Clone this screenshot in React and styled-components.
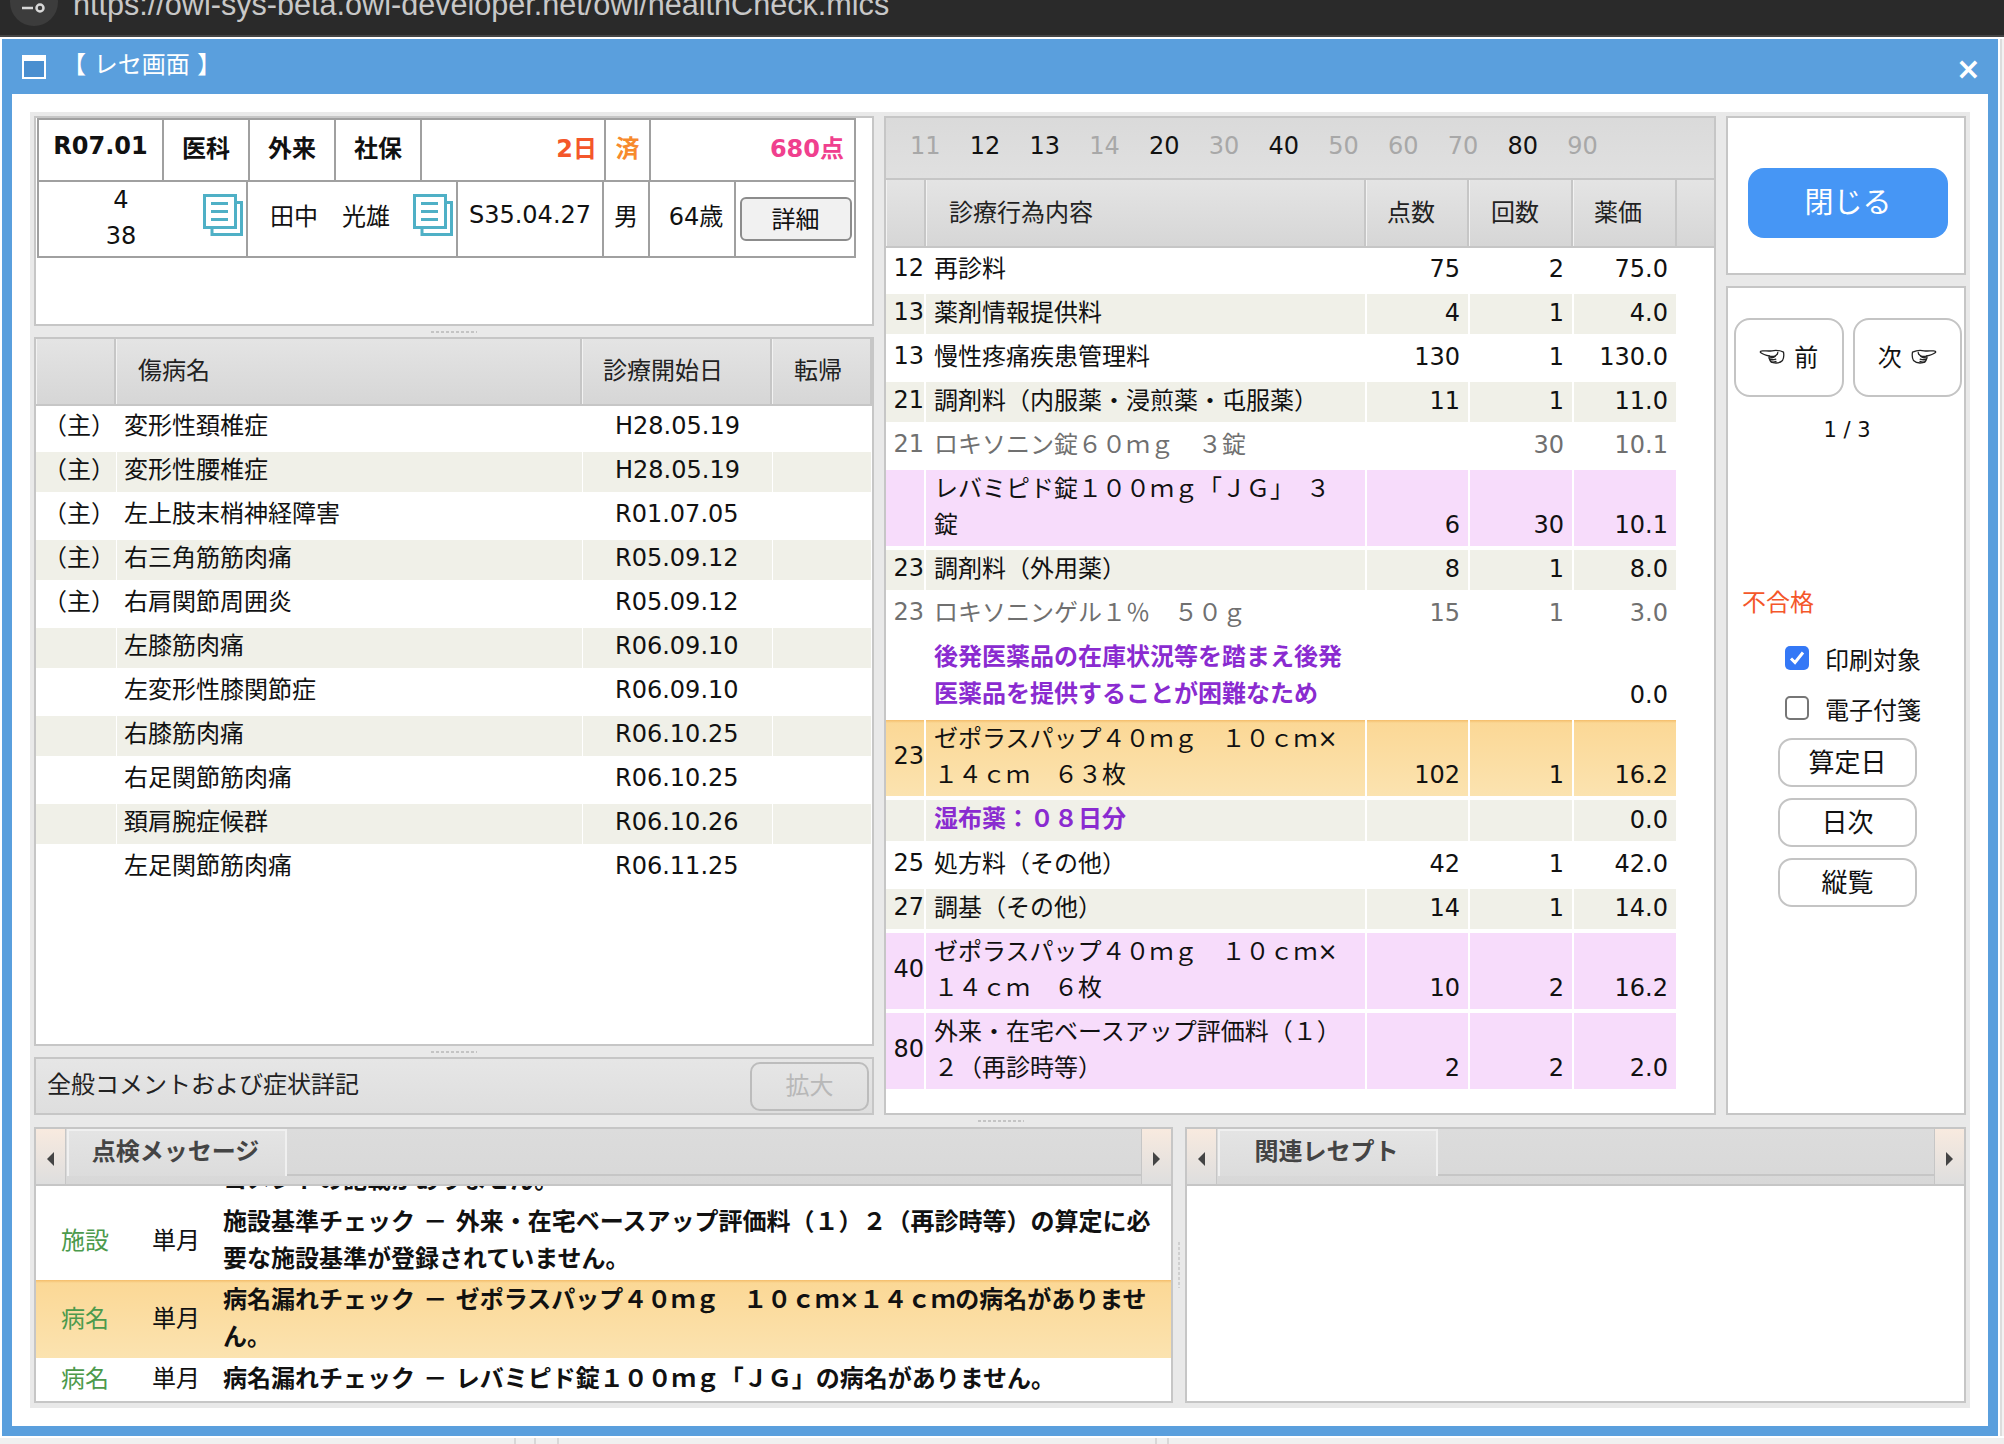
import React from "react";
import styled, { createGlobalStyle, css } from "styled-components";

const Global = createGlobalStyle`
  html, body { margin: 0; padding: 0; background: #fff; }
  body { font-family: "DejaVu Sans", "Noto Sans CJK JP", sans-serif; font-size: 24px; color: #111; }
  * { box-sizing: border-box; }
`;

const Page = styled.div`
  width: 2004px;
  height: 1444px;
  overflow: hidden;
  display: flex;
  flex-direction: column;
  background: #fff;
`;
const AddressBar = styled.div`
  height: 37px;
  background: #2a2a2a;
  border-bottom: 2px solid #444;
  display: flex;
  align-items: flex-end;
  overflow: hidden;
  padding: 0 0 16px 10px;
  flex: none;
`;
const SiteBadge = styled.div`
  width: 48px;
  height: 48px;
  border-radius: 50%;
  background: #3c3c3c;
  flex: none;
  margin-bottom: -7px;
  display: flex;
  align-items: flex-end;
  justify-content: center;
  padding-bottom: 12px;
`;
const Url = styled.div`
  font-family: "Liberation Sans", sans-serif;
  font-size: 30.6px;
  line-height: 30px;
  color: #c8c8c8;
  margin-left: 15px;
  white-space: nowrap;
`;
const MainRow = styled.div`
  display: flex;
  justify-content: space-between;
  margin-top: 2px;
  height: 1397px;
  flex: none;
`;
const PageEdge = styled.div`
  width: 4px;
  background: linear-gradient(90deg, #dcdcdc 0 2px, #f2f2f2 2px);
`;
const Window = styled.div`
  margin-left: 2px;
  width: 1996px;
  background: #5a9fdd;
  display: flex;
  flex-direction: column;
`;
const TitleBar = styled.div`
  height: 55px;
  display: flex;
  align-items: center;
  padding: 0 20px;
  color: #fff;
  flex: none;
`;
const WindowGlyph = styled.div`
  width: 24px;
  height: 24px;
  border: 2px solid #fff;
  border-top-width: 6px;
  background: #4a8fd0;
  margin-right: 16px;
  flex: none;
`;
const Title = styled.div`
  font-size: 24px;
  line-height: 30px;
  flex: 1;
  margin-top: -4px;
`;
const Close = styled.div`
  font-size: 30px;
  font-weight: bold;
  line-height: 30px;
  margin-right: -3px;
  margin-top: 4px;
`;
const WindowBody = styled.div`
  flex: 1;
  margin: 0 10px 10px;
  background: #fff;
  padding: 18px;
  min-height: 0;
`;
const Work = styled.div`
  height: 100%;
  background: #e9e9e9;
  padding: 4px;
  display: flex;
  flex-direction: column;
`;
const TopRow = styled.div`
  display: grid;
  grid-template-columns: 840px 832px 240px;
  column-gap: 10px;
  height: 999px;
  flex: none;
`;
const Column = styled.div`
  display: flex;
  flex-direction: column;
  min-height: 0;
`;
const Panel = styled.div`
  background: #fff;
  border: 2px solid #c6c6c6;
  height: ${(p) => p.$h}px;
  flex: ${(p) => (p.$h ? "none" : 1)};
  min-height: 0;
  overflow: hidden;
`;
const GripRow = styled.div`
  height: ${(p) => p.$h}px;
  flex: none;
  display: flex;
  align-items: center;
  padding-left: ${(p) => p.$left}px;
`;
const Grip = styled.div`
  width: 46px;
  height: 2px;
  background: repeating-linear-gradient(90deg, #c4c4c4 0 3px, transparent 3px 5px);
`;

/* receipt header */
const InfoTable = styled.div`
  margin: 0 0 0 1px;
  width: 819px;
  border: 2px solid #a0a0a0;
`;
const InfoRow = styled.div`
  display: grid;
  grid-template-columns: ${(p) => p.$cols};
  grid-template-rows: minmax(0, 1fr);
  height: ${(p) => p.$h}px;
  border-top: ${(p) => (p.$split ? "2px solid #a0a0a0" : "none")};
`;
const InfoCell = styled.div`
  display: flex;
  align-items: center;
  min-height: 0;
  justify-content: ${(p) => p.$justify || "center"};
  padding: 0 ${(p) => p.$pad || 0}px ${(p) => p.$pb}px ${(p) => p.$padLeft || p.$pad || 0}px;
  border-right: ${(p) => (p.$last ? "none" : "2px solid #a0a0a0")};
  font-weight: ${(p) => (p.$bold ? "bold" : "normal")};
  color: ${(p) => p.$color || "#111"};
  white-space: pre;
`;
const IdStack = styled.div`
  flex: 1;
  text-align: center;
  line-height: 36px;
  margin-top: 7px;
`;
const PatientName = styled.div`
  flex: 1;
  padding-left: 22px;
  white-space: pre;
`;
const DocIcon = styled.svg`
  width: 40px;
  height: 42px;
  flex: none;
  align-self: flex-start;
  margin: 12px 3px 0 0;
`;
const DetailButton = styled.div`
  width: 112px;
  height: 44px;
  margin: 8px 0 0 1px;
  background: #f1f1f1;
  border: 2px solid #8c8c8c;
  border-radius: 6px;
  display: flex;
  align-items: center;
  justify-content: center;
  padding-bottom: 2px;
`;

/* shared header */
const headCell = css`
  background: linear-gradient(#e4e4e4, #d6d6d6);
  border-left: 1px solid #f2f2f2;
  border-right: 2px solid #c6c6c6;
  color: #222;
  display: flex;
  align-items: center;
  padding-bottom: 6px;
`;

/* disease list */
const DiseaseHead = styled.div`
  display: grid;
  grid-template-columns: 80px 466px 190px 1fr;
  height: 67px;
  border-bottom: 2px solid #c6c6c6;
`;
const DiseaseHeadCell = styled.div`
  ${headCell}
  padding-left: ${(p) => p.$pad || 0}px;
`;
const DiseaseRows = styled.div`
  display: flex;
  flex-direction: column;
  row-gap: 4px;
  padding-top: 2px;
`;
const DiseaseRowBox = styled.div`
  display: grid;
  grid-template-columns: 80px 465px 189px 98px;
  column-gap: 1px;
  height: 40px;
`;
const DiseaseCell = styled.div`
  background: ${(p) => (p.$shade ? "#f0f0e8" : "#fff")};
  line-height: 37px;
  padding-left: ${(p) => p.$pad || 0}px;
  white-space: nowrap;
`;
const CommentBar = styled.div`
  height: 58px;
  flex: none;
  border: 2px solid #c6c6c6;
  background: linear-gradient(#e6e6e6, #dedede);
  display: flex;
  align-items: center;
  justify-content: space-between;
  padding: 0 3px 0 11px;
`;
const CommentLabel = styled.div`
  color: #222;
  margin-top: -7px;
`;
const ExpandButton = styled.div`
  width: 119px;
  height: 49px;
  border: 2px solid #bcbcbc;
  border-radius: 10px;
  color: #b8b8b8;
  display: flex;
  align-items: center;
  justify-content: center;
  padding-bottom: 5px;
`;

/* treatment table */
const CodeBar = styled.div`
  height: 62px;
  background: linear-gradient(#dadada, #e0e0e0);
  border-bottom: 2px solid #c6c6c6;
  display: flex;
  align-items: center;
  padding-left: 9.5px;
`;
const CodeTab = styled.div`
  width: 59.75px;
  text-align: center;
  color: ${(p) => (p.$on ? "#111" : "#a8a8a8")};
  margin-top: -5px;
`;
const TreatHead = styled.div`
  height: 68px;
  background: linear-gradient(#e4e4e4, #d6d6d6);
  border-bottom: 2px solid #c6c6c6;
  display: grid;
  grid-template-columns: 40px 440px 103px 104px 104px 1fr;
`;
const TreatHeadCell = styled.div`
  ${headCell}
  padding-left: ${(p) => p.$pad || 0}px;
`;
const TreatRows = styled.div`
  display: flex;
  flex-direction: column;
  row-gap: 4px;
  padding-top: 2px;
`;
const TreatRowBox = styled.div`
  display: grid;
  grid-template-columns: 38px 439px 101px 102px 102px;
  column-gap: 2px;
  min-height: ${(p) => p.$h}px;
`;
const rowFill = {
  plain: "#fff",
  shade: "#f0f0e8",
  pink: "#f7dcfb",
  orange: "linear-gradient(#f4bd6a 0, #fbd896 3px, #fbe3b0 100%)",
};
const TreatCell = styled.div`
  background: ${(p) => rowFill[p.$fill]};
  color: ${(p) => (p.$muted ? "#707070" : p.$purple ? "#8a2bd0" : "#111")};
  font-weight: ${(p) => (p.$purple ? "bold" : "normal")};
  line-height: ${(p) => (p.$purple ? 37 : 36)}px;
  white-space: pre-line;
`;
const CodeCell = styled(TreatCell)`
  display: flex;
  align-items: center;
  justify-content: flex-end;
  padding-bottom: 4px;
`;
const TextCell = styled(TreatCell)`
  padding: 1px 0 3px 8px;
`;
const NumCell = styled(TreatCell)`
  display: flex;
  align-items: flex-end;
  justify-content: flex-end;
  padding: 0 8px 3px 0;
`;

/* side */
const CloseButton = styled.div`
  width: 200px;
  height: 70px;
  margin: 50px 0 0 20px;
  background: #4696f5;
  color: #fff;
  border-radius: 16px;
  font-size: 29px;
  display: flex;
  align-items: center;
  justify-content: center;
  padding-bottom: 6px;
`;
const NavRow = styled.div`
  display: flex;
  column-gap: 9px;
  padding: 30px 0 0 6px;
`;
const NavButton = styled.div`
  width: 109.5px;
  height: 79px;
  border: 2px solid #c4c4c4;
  border-radius: 16px;
  display: flex;
  align-items: center;
  justify-content: center;
  column-gap: 9px;
  padding-bottom: 4px;
`;
const HandIcon = styled.svg`
  width: 26px;
  height: 15px;
  flex: none;
  margin-top: 2px;
  transform: ${(p) => (p.$flip ? "scaleX(-1)" : "none")};
`;
const PageNo = styled.div`
  margin-top: 20px;
  padding-left: 2px;
  text-align: center;
  font-size: 21px;
  line-height: 26px;
`;
const Verdict = styled.div`
  margin: 145px 0 0 14px;
  line-height: 30px;
  color: #f4572a;
`;
const CheckRow = styled.div`
  display: flex;
  align-items: center;
  column-gap: 16px;
  height: 24px;
  margin: ${(p) => p.$mt}px 0 0 57px;
`;
const CheckBox = styled.span`
  width: 24px;
  height: 24px;
  border-radius: 5px;
  flex: none;
  background: ${(p) => (p.$on ? "#3478f6" : "#fff")};
  border: ${(p) => (p.$on ? "none" : "2px solid #767676")};
  display: flex;
  align-items: center;
  justify-content: center;
`;
const SideButton = styled.div`
  width: 139px;
  height: 49px;
  margin: ${(p) => p.$mt}px 0 0 50px;
  border: 2px solid #c4c4c4;
  border-radius: 14px;
  font-size: 26px;
  display: flex;
  align-items: center;
  justify-content: center;
  padding-bottom: 4px;
`;

/* bottom */
const BottomRow = styled.div`
  display: flex;
  height: 276px;
  flex: none;
`;
const VGripCol = styled.div`
  width: 12px;
  flex: none;
  display: flex;
  justify-content: center;
  align-items: center;
`;
const VGrip = styled.div`
  width: 2px;
  height: 46px;
  background: repeating-linear-gradient(180deg, #cfcfcf 0 3px, transparent 3px 5px);
`;
const TabPanel = styled.div`
  width: ${(p) => p.$w}px;
  flex: none;
  border: 2px solid #c6c6c6;
  background: #fff;
  display: flex;
  flex-direction: column;
  overflow: hidden;
`;
const TabStrip = styled.div`
  height: 57px;
  flex: none;
  display: flex;
  background: linear-gradient(#dcdcdc, #d8d8d8);
  border-bottom: 2px solid #c6c6c6;
`;
const Scroller = styled.div`
  width: 30px;
  flex: none;
  background: linear-gradient(#f8eadf, #dedede);
  border-${(p) => (p.$right ? "left" : "right")}: 1px solid #c6c6c6;
  display: flex;
  align-items: center;
  justify-content: center;
  padding-top: 4px;
`;
const Arrow = styled.span`
  width: 0;
  height: 0;
  border-top: 7px solid transparent;
  border-bottom: 7px solid transparent;
  ${(p) => (p.$right ? "border-left: 7px solid #444;" : "border-right: 7px solid #444;")}
`;
const TabArea = styled.div`
  flex: 1;
  display: flex;
  align-items: flex-start;
`;
const Tab = styled.div`
  width: 220px;
  height: 47px;
  margin: 0 0 0 1px;
  background: linear-gradient(#e4e4e4, #dcdcdc);
  border-top: 2px solid #f0f0f0;
  border-left: 2px solid #f0f0f0;
  border-right: 2px solid #f0f0f0;
  font-weight: bold;
  color: #444;
  display: flex;
  align-items: center;
  justify-content: center;
  padding: 0 3px 8px 0;
  flex: none;
`;
const TabRule = styled.div`
  flex: 1;
  height: 47px;
  border-bottom: 2px solid #c6c6c6;
`;
const Messages = styled.div`
  flex: 1;
  min-height: 0;
  overflow: hidden;
  display: flex;
  flex-direction: column;
  justify-content: flex-end;
`;
const MessageRow = styled.div`
  flex: none;
  display: grid;
  grid-template-columns: 91px 71px 1fr;
  padding: 2px 0 2px 25px;
  align-items: center;
  min-height: 43px;
  background: ${(p) =>
    p.$hot ? "linear-gradient(#f4bd6a 0, #fbd896 3px, #fbe3b0 100%)" : "#fff"};
  line-height: 37px;
`;
const MessageKind = styled.div`
  color: #4c9a4c;
`;
const MessageSpan = styled.div``;
const MessageText = styled.div`
  font-weight: bold;
  white-space: pre-line;
`;
const PageFoot = styled.div`
  flex: 1;
  margin-top: 2px;
  background:
    linear-gradient(90deg, transparent 514px, #d8d8d8 514px 516px, transparent 516px 534px, #d8d8d8 534px 536px, transparent 536px 557px, #d8d8d8 557px 559px, transparent 559px 1155px, #d8d8d8 1155px 1157px, transparent 1157px 1167px, #d8d8d8 1167px 1169px, transparent 1169px),
    #f0f0f0;
`;

const diseases = [
  ["（主）", "変形性頚椎症", "H28.05.19"],
  ["（主）", "変形性腰椎症", "H28.05.19"],
  ["（主）", "左上肢末梢神経障害", "R01.07.05"],
  ["（主）", "右三角筋筋肉痛", "R05.09.12"],
  ["（主）", "右肩関節周囲炎", "R05.09.12"],
  ["", "左膝筋肉痛", "R06.09.10"],
  ["", "左変形性膝関節症", "R06.09.10"],
  ["", "右膝筋肉痛", "R06.10.25"],
  ["", "右足関節筋肉痛", "R06.10.25"],
  ["", "頚肩腕症候群", "R06.10.26"],
  ["", "左足関節筋肉痛", "R06.11.25"],
];

const codes = [
  ["11", 0], ["12", 1], ["13", 1], ["14", 0], ["20", 1], ["30", 0],
  ["40", 1], ["50", 0], ["60", 0], ["70", 0], ["80", 1], ["90", 0],
];

const treatments = [
  { code: "12", text: "再診料", a: "75", b: "2", c: "75.0", fill: "plain", h: 40 },
  { code: "13", text: "薬剤情報提供料", a: "4", b: "1", c: "4.0", fill: "shade", h: 40 },
  { code: "13", text: "慢性疼痛疾患管理料", a: "130", b: "1", c: "130.0", fill: "plain", h: 40 },
  { code: "21", text: "調剤料（内服薬・浸煎薬・屯服薬）", a: "11", b: "1", c: "11.0", fill: "shade", h: 40 },
  { code: "21", text: "ロキソニン錠６０ｍｇ　３錠", a: "", b: "30", c: "10.1", fill: "plain", muted: true, h: 40 },
  { code: "", text: "レバミピド錠１００ｍｇ「ＪＧ」　３\n錠", a: "6", b: "30", c: "10.1", fill: "pink", h: 76 },
  { code: "23", text: "調剤料（外用薬）", a: "8", b: "1", c: "8.0", fill: "shade", h: 40 },
  { code: "23", text: "ロキソニンゲル１％　５０ｇ", a: "15", b: "1", c: "3.0", fill: "plain", muted: true, h: 40 },
  { code: "", text: "後発医薬品の在庫状況等を踏まえ後発\n医薬品を提供することが困難なため", a: "", b: "", c: "0.0", fill: "plain", h: 78, purple: true },
  { code: "23", text: "ゼポラスパップ４０ｍｇ　１０ｃｍ×\n１４ｃｍ　６３枚", a: "102", b: "1", c: "16.2", fill: "orange", h: 76 },
  { code: "", text: "湿布薬：０８日分", a: "", b: "", c: "0.0", fill: "shade", purple: true, h: 41 },
  { code: "25", text: "処方料（その他）", a: "42", b: "1", c: "42.0", fill: "plain", h: 40 },
  { code: "27", text: "調基（その他）", a: "14", b: "1", c: "14.0", fill: "shade", h: 40 },
  { code: "40", text: "ゼポラスパップ４０ｍｇ　１０ｃｍ×\n１４ｃｍ　６枚", a: "10", b: "2", c: "16.2", fill: "pink", h: 76 },
  { code: "80", text: "外来・在宅ベースアップ評価料（１）\n２（再診時等）", a: "2", b: "2", c: "2.0", fill: "pink", h: 76 },
];

const messages = [
  { kind: "", span: "", text: "コメントの記載がありません。" },
  { kind: "施設", span: "単月", text: "施設基準チェック － 外来・在宅ベースアップ評価料（１）２（再診時等）の算定に必\n要な施設基準が登録されていません。" },
  { kind: "病名", span: "単月", text: "病名漏れチェック － ゼポラスパップ４０ｍｇ　１０ｃｍ×１４ｃｍの病名がありませ\nん。", hot: true },
  { kind: "病名", span: "単月", text: "病名漏れチェック － レバミピド錠１００ｍｇ「ＪＧ」の病名がありません。" },
];

function Doc() {
  return (
    <DocIcon viewBox="0 0 40 42" fill="none" stroke="#4fb0c6" strokeWidth="3">
      <path d="M34 8.5h4.500v32h-29.500v-6" />
      <rect x="1.500" y="1.500" width="31" height="32" fill="#fff" />
      <path d="M8 9.500h17M8 17.500h17M8 25.500h17" />
    </DocIcon>
  );
}

function Hand({ flip }) {
  return (
    <HandIcon $flip={flip} viewBox="0 0 26 15" fill="none" stroke="#222" strokeWidth="1.300" strokeLinecap="round" strokeLinejoin="round">
      <path d="M1.500 3.500C1 2.500 2 1.800 3.500 1.800C7 1.800 10 2.300 13 1.800C16 1 20 1 24.500 3.200C25 6 25 9 23.500 11.500C21 14 17 14.300 14 13.700C12 13.300 11 12 10.800 10.500C10 9.500 9.800 8 10.500 7C8 6.500 4 5.500 1.500 3.500Z" />
      <path d="M10.500 7.200C12.500 7.500 15 7.300 16.500 6.800C15.500 8.300 13 8.800 10.800 8.800" />
      <path d="M10.800 10.500C12.500 10.800 15 10.800 16.800 10.200M12.300 13C14 13.200 15.800 13 17 12.400M16.500 6.800C18 5.800 19 4.800 18.800 3.500" />
    </HandIcon>
  );
}

function TabBox({ label }) {
  return (
    <TabStrip>
      <Scroller><Arrow /></Scroller>
      <TabArea>
        <Tab>{label}</Tab>
        <TabRule />
      </TabArea>
      <Scroller $right><Arrow $right /></Scroller>
    </TabStrip>
  );
}

export default function App() {
  return (
    <Page>
      <Global />
      <AddressBar>
        <SiteBadge>
          <svg width="24" height="12" viewBox="0 0 24 12" fill="none" stroke="#d8d8d8" strokeWidth="2.500">
            <path d="M0 6h11" />
            <circle cx="18" cy="6" r="3.500" />
          </svg>
        </SiteBadge>
        <Url>https://owl-sys-beta.owl-developer.net/owl/healthCheck.mics</Url>
      </AddressBar>
      <MainRow>
        <Window>
          <TitleBar>
            <WindowGlyph />
            <Title>【 レセ画面 】</Title>
            <Close>×</Close>
          </TitleBar>
          <WindowBody>
            <Work>
              <TopRow>
                <Column>
                  <Panel $h={210}>
                    <InfoTable>
                      <InfoRow $h={60} $cols="125px 86px 86px 86px 184px 45px 1fr">
                        <InfoCell $pb={8} $bold>R07.01</InfoCell>
                        <InfoCell $pb={8} $bold>医科</InfoCell>
                        <InfoCell $pb={8} $bold>外来</InfoCell>
                        <InfoCell $pb={8} $bold>社保</InfoCell>
                        <InfoCell $pb={8} $bold $color="#f4572a" $justify="flex-end" $pad={7}>2日</InfoCell>
                        <InfoCell $pb={8} $bold $color="#f78a2d">済</InfoCell>
                        <InfoCell $pb={8} $bold $last $color="#f0408e" $justify="flex-end" $pad={10}>680点</InfoCell>
                      </InfoRow>
                      <InfoRow $split $h={76} $cols="209px 210px 146px 46px 86px 1fr">
                        <InfoCell $pb={9}>
                          <IdStack>4<br />38</IdStack>
                          <Doc />
                        </InfoCell>
                        <InfoCell $pb={9}>
                          <PatientName>田中　光雄</PatientName>
                          <Doc />
                        </InfoCell>
                        <InfoCell $pb={9}>S35.04.27</InfoCell>
                        <InfoCell $pb={9}>男</InfoCell>
                        <InfoCell $pb={9} $padLeft={8}>64歳</InfoCell>
                        <InfoCell $pb={9} $last><DetailButton>詳細</DetailButton></InfoCell>
                      </InfoRow>
                    </InfoTable>
                  </Panel>
                  <GripRow $h={11} $left={397}><Grip /></GripRow>
                  <Panel $h={709}>
                    <DiseaseHead>
                      <DiseaseHeadCell />
                      <DiseaseHeadCell $pad={21}>傷病名</DiseaseHeadCell>
                      <DiseaseHeadCell $pad={20}>診療開始日</DiseaseHeadCell>
                      <DiseaseHeadCell $pad={21}>転帰</DiseaseHeadCell>
                    </DiseaseHead>
                    <DiseaseRows>
                      {diseases.map((d, i) => (
                        <DiseaseRowBox key={i}>
                          <DiseaseCell $shade={i % 2 === 1} $pad={7}>{d[0]}</DiseaseCell>
                          <DiseaseCell $shade={i % 2 === 1} $pad={7}>{d[1]}</DiseaseCell>
                          <DiseaseCell $shade={i % 2 === 1} $pad={32}>{d[2]}</DiseaseCell>
                          <DiseaseCell $shade={i % 2 === 1} />
                        </DiseaseRowBox>
                      ))}
                    </DiseaseRows>
                  </Panel>
                  <GripRow $h={11} $left={397}><Grip /></GripRow>
                  <CommentBar>
                    <CommentLabel>全般コメントおよび症状詳記</CommentLabel>
                    <ExpandButton>拡大</ExpandButton>
                  </CommentBar>
                </Column>
                <Panel>
                  <CodeBar>
                    {codes.map(([c, on]) => (
                      <CodeTab key={c} $on={!!on}>{c}</CodeTab>
                    ))}
                  </CodeBar>
                  <TreatHead>
                    <TreatHeadCell />
                    <TreatHeadCell $pad={22}>診療行為内容</TreatHeadCell>
                    <TreatHeadCell $pad={20}>点数</TreatHeadCell>
                    <TreatHeadCell $pad={21}>回数</TreatHeadCell>
                    <TreatHeadCell $pad={20}>薬価</TreatHeadCell>
                    <div />
                  </TreatHead>
                  <TreatRows>
                    {treatments.map((t, i) => (
                      <TreatRowBox key={i} $h={t.h}>
                        <CodeCell $fill={t.fill} $muted={t.muted}>{t.code}</CodeCell>
                        <TextCell $fill={t.fill} $muted={t.muted} $purple={t.purple}>{t.text}</TextCell>
                        <NumCell $fill={t.fill} $muted={t.muted}>{t.a}</NumCell>
                        <NumCell $fill={t.fill} $muted={t.muted}>{t.b}</NumCell>
                        <NumCell $fill={t.fill} $muted={t.muted}>{t.c}</NumCell>
                      </TreatRowBox>
                    ))}
                  </TreatRows>
                </Panel>
                <Column>
                  <Panel $h={159}>
                    <CloseButton>閉じる</CloseButton>
                  </Panel>
                  <GripRow $h={11} $left={0} />
                  <Panel>
                    <NavRow>
                      <NavButton><Hand />前</NavButton>
                      <NavButton>次<Hand flip /></NavButton>
                    </NavRow>
                    <PageNo>1 / 3</PageNo>
                    <Verdict>不合格</Verdict>
                    <CheckRow $mt={28}>
                      <CheckBox $on>
                        <svg width="16" height="14" viewBox="0 0 16 14" fill="none" stroke="#fff" strokeWidth="3">
                          <path d="M2 7.500l4 4L14 1.500" />
                        </svg>
                      </CheckBox>
                      印刷対象
                    </CheckRow>
                    <CheckRow $mt={26}>
                      <CheckBox />
                      電子付箋
                    </CheckRow>
                    <SideButton $mt={18}>算定日</SideButton>
                    <SideButton $mt={11}>日次</SideButton>
                    <SideButton $mt={11}>縦覧</SideButton>
                  </Panel>
                </Column>
              </TopRow>
              <GripRow $h={12} $left={944}><Grip /></GripRow>
              <BottomRow>
                <TabPanel $w={1139}>
                  <TabBox label="点検メッセージ" />
                  <Messages>
                    {messages.map((m, i) => (
                      <MessageRow key={i} $hot={m.hot}>
                        <MessageKind>{m.kind}</MessageKind>
                        <MessageSpan>{m.span}</MessageSpan>
                        <MessageText>{m.text}</MessageText>
                      </MessageRow>
                    ))}
                  </Messages>
                </TabPanel>
                <VGripCol><VGrip /></VGripCol>
                <TabPanel $w={781}>
                  <TabBox label="関連レセプト" />
                </TabPanel>
              </BottomRow>
            </Work>
          </WindowBody>
        </Window>
        <PageEdge />
      </MainRow>
      <PageFoot />
    </Page>
  );
}
